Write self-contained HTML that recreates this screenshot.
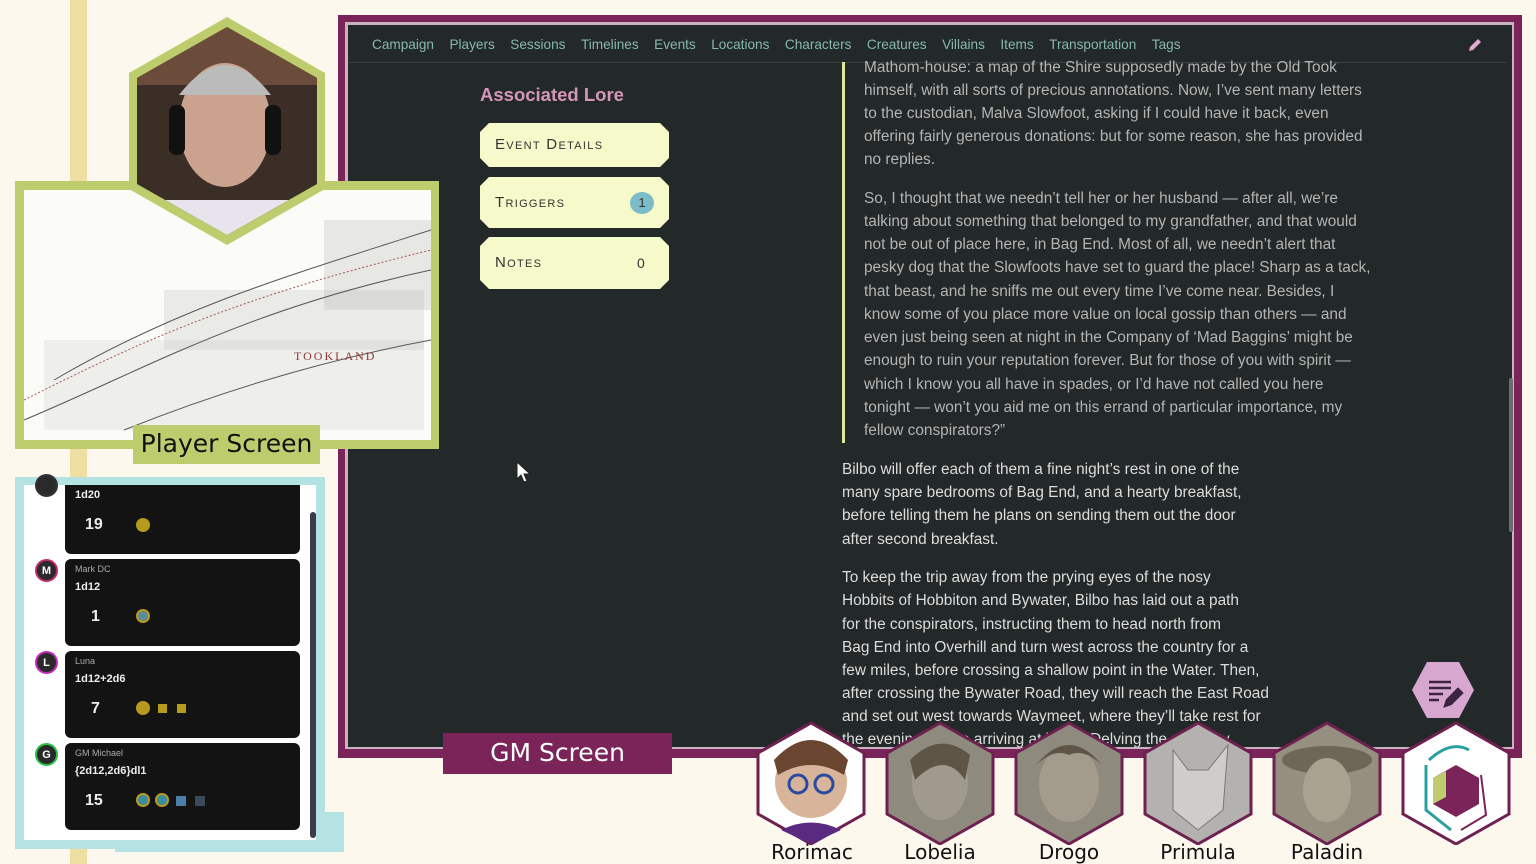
<!DOCTYPE html>
<html><head><meta charset="utf-8"><style>
*{margin:0;padding:0;box-sizing:border-box}
body{width:1536px;height:864px;overflow:hidden;background:#fcf8ed;position:relative;font-family:"Liberation Sans",sans-serif}
.a{position:absolute}
.nav span{margin-right:15.5px}
.ln{position:absolute;white-space:nowrap;font-size:15.4px;color:#b4b4b4}
.p{color:#dcdcdc}
.btn{position:absolute;left:480px;width:189px;background:#f6f9c9;clip-path:polygon(9px 0,180px 0,189px 9px,189px calc(100% - 9px),180px 100%,9px 100%,0 calc(100% - 9px),0 9px);font-variant:small-caps;letter-spacing:1.3px;font-size:15px;color:#333;padding-left:15px}
.card{position:absolute;left:65px;width:235px;background:#131313;border-radius:6px;color:#eee}
.av{position:absolute;left:35px;width:23px;height:23px;border-radius:50%;background:#2a2a2a;color:#fff;font-size:11px;font-weight:bold;text-align:center;line-height:20px}
.nm{position:absolute;font-size:20px;color:#111;width:130px;text-align:center;top:840px;font-family:"DejaVu Sans",sans-serif}
</style></head><body>
<div class="a" style="left:70px;top:0;width:17px;height:864px;background:#efdfa3"></div>

<div class="a" style="left:338px;top:15px;width:1184px;height:743px;background:#7b2459"></div>
<div class="a" style="left:345px;top:22px;width:1169px;height:727px;background:#c9b3c0"></div>
<div class="a" style="left:348px;top:25px;width:1164px;height:722px;background:#232828"></div>
<div class="a" style="left:349px;top:62px;width:1157px;height:1px;background:#3d4343"></div>
<div class="a nav" style="left:372px;top:37px;font-size:13.6px;color:#86b8ad;white-space:nowrap"><span>Campaign</span><span>Players</span><span>Sessions</span><span>Timelines</span><span>Events</span><span>Locations</span><span>Characters</span><span>Creatures</span><span>Villains</span><span>Items</span><span>Transportation</span><span>Tags</span></div>
<svg class="a" style="left:1467px;top:37px" width="16" height="16" viewBox="0 0 16 16"><path d="M2 14 L3 10 L11 2 L14 5 L6 13 Z" fill="#e0a9d0"/></svg>
<div class="a" style="left:1509px;top:378px;width:4px;height:154px;background:#6a6e6e;border-radius:2px"></div>

<div class="a" style="left:480px;top:84px;font-size:18.5px;font-weight:bold;color:#d497b9">Associated Lore</div>
<div class="btn" style="top:123px;height:44px;line-height:44px">Event Details</div>
<div class="btn" style="top:177px;height:51px;line-height:51px">Triggers<span style="position:absolute;left:150px;top:15px;width:24px;height:22px;border-radius:50%;background:#7cbcc9;text-align:center;line-height:22px;font-size:13px;letter-spacing:0">1</span></div>
<div class="btn" style="top:237px;height:52px;line-height:52px">Notes<span style="position:absolute;left:157px;letter-spacing:0;font-size:14px">0</span></div>

<svg class="a" style="left:515px;top:461px" width="18" height="22"><path d="M2 1 L2 18 L6 14 L9 21 L12 20 L9 13 L15 13 Z" fill="#fff" stroke="#222" stroke-width="1"/></svg>

<div class="a" style="left:842px;top:62px;width:3px;height:381px;background:#dfe59a"></div>
<div class="ln" style="left:864px;top:59px">Mathom-house: a map of the Shire supposedly made by the Old Took</div>
<div class="ln" style="left:864px;top:82px">himself, with all sorts of precious annotations. Now, I’ve sent many letters</div>
<div class="ln" style="left:864px;top:105px">to the custodian, Malva Slowfoot, asking if I could have it back, even</div>
<div class="ln" style="left:864px;top:128px">offering fairly generous donations: but for some reason, she has provided</div>
<div class="ln" style="left:864px;top:151px">no replies.</div>
<div class="ln" style="left:864px;top:190px">So, I thought that we needn’t tell her or her husband — after all, we’re</div>
<div class="ln" style="left:864px;top:213px">talking about something that belonged to my grandfather, and that would</div>
<div class="ln" style="left:864px;top:236px">not be out of place here, in Bag End. Most of all, we needn’t alert that</div>
<div class="ln" style="left:864px;top:259px">pesky dog that the Slowfoots have set to guard the place! Sharp as a tack,</div>
<div class="ln" style="left:864px;top:283px">that beast, and he sniffs me out every time I’ve come near. Besides, I</div>
<div class="ln" style="left:864px;top:306px">know some of you place more value on local gossip than others — and</div>
<div class="ln" style="left:864px;top:329px">even just being seen at night in the Company of ‘Mad Baggins’ might be</div>
<div class="ln" style="left:864px;top:352px">enough to ruin your reputation forever. But for those of you with spirit —</div>
<div class="ln" style="left:864px;top:376px">which I know you all have in spades, or I’d have not called you here</div>
<div class="ln" style="left:864px;top:399px">tonight — won’t you aid me on this errand of particular importance, my</div>
<div class="ln" style="left:864px;top:422px">fellow conspirators?”</div>
<div class="ln p" style="left:842px;top:461px">Bilbo will offer each of them a fine night’s rest in one of the</div>
<div class="ln p" style="left:842px;top:484px">many spare bedrooms of Bag End, and a hearty breakfast,</div>
<div class="ln p" style="left:842px;top:507px">before telling them he plans on sending them out the door</div>
<div class="ln p" style="left:842px;top:531px">after second breakfast.</div>
<div class="ln p" style="left:842px;top:569px">To keep the trip away from the prying eyes of the nosy</div>
<div class="ln p" style="left:842px;top:592px">Hobbits of Hobbiton and Bywater, Bilbo has laid out a path</div>
<div class="ln p" style="left:842px;top:616px">for the conspirators, instructing them to head north from</div>
<div class="ln p" style="left:842px;top:639px">Bag End into Overhill and turn west across the country for a</div>
<div class="ln p" style="left:842px;top:662px">few miles, before crossing a shallow point in the Water. Then,</div>
<div class="ln p" style="left:842px;top:685px">after crossing the Bywater Road, they will reach the East Road</div>
<div class="ln p" style="left:842px;top:708px">and set out west towards Waymeet, where they’ll take rest for</div>
<div class="ln p" style="left:842px;top:731px;height:16px;overflow:hidden">the evening before arriving at last in Delving the next day.</div>

<svg class="a" style="left:1412px;top:661px" width="62" height="58" viewBox="0 0 62 58"><polygon points="15,1 47,1 62,29 47,57 15,57 0,29" fill="#d8a7d0"/><g stroke="#3a2440" stroke-width="2.4" fill="none"><path d="M17 21H39M17 27H39M17 33H31M17 39H27"/><path d="M33 45 L35 39 L46 28 L50 32 L39 43 Z" fill="#3a2440"/></g></svg>

<div class="a" style="left:443px;top:733px;width:229px;height:41px;background:#7b2459;color:#fff;font-size:25px;text-align:center;line-height:40px;font-family:'DejaVu Sans',sans-serif">GM Screen</div>

<div class="a" style="left:15px;top:181px;width:424px;height:268px;background:#bdcc6c"></div>
<div class="a" style="left:24px;top:190px;width:407px;height:250px;background:#fbfbf8;overflow:hidden">
<svg width="407" height="250"><g stroke="#555" fill="none" stroke-width="1"><path d="M0 210 C100 160 200 110 407 60" stroke="#a55" stroke-dasharray="2 2"/><path d="M0 230 C120 180 220 120 407 80"/><path d="M30 190 C150 120 250 90 407 40"/><path d="M100 240 C200 200 300 170 407 150"/></g>
<g fill="#666" opacity="0.55"><rect x="20" y="150" width="380" height="90" opacity="0.15"/><rect x="140" y="100" width="260" height="60" opacity="0.2"/><rect x="300" y="30" width="107" height="90" opacity="0.25"/></g>
<text x="270" y="170" font-family="Liberation Serif" font-size="12" fill="#8a3a3a" letter-spacing="2">TOOKLAND</text></svg></div>
<div class="a" style="left:133px;top:425px;width:187px;height:39px;background:#bdcc6c;font-size:25px;text-align:center;line-height:38px;color:#111;font-family:'DejaVu Sans',sans-serif">Player Screen</div>
<svg class="a" style="left:127px;top:15px" width="200" height="232" viewBox="0 0 200 232"><polygon points="100,2 198,58 198,174 100,230 2,174 2,58" fill="#bdcc6c"/><clipPath id="h"><polygon points="100,12 190,63 190,169 100,220 10,169 10,63"/></clipPath><g clip-path="url(#h)"><rect width="200" height="232" fill="#3a2e26"/><rect x="0" y="0" width="200" height="70" fill="#6b4c3a"/><rect x="0" y="185" width="200" height="50" fill="#e8e4ee"/><ellipse cx="98" cy="110" rx="46" ry="62" fill="#caa28e"/><path d="M52 80 Q98 20 144 80" fill="#bbb"/><rect x="42" y="90" width="16" height="50" rx="7" fill="#111"/><rect x="138" y="90" width="16" height="50" rx="7" fill="#111"/></g></svg>

<div class="a" style="left:115px;top:812px;width:229px;height:40px;background:#b5e3e3"></div>
<div class="a" style="left:15px;top:477px;width:310px;height:372px;background:#b5e3e3"></div>
<div class="a" style="left:24px;top:485px;width:292px;height:355px;background:#fff;overflow:hidden"></div>
<div class="a" style="left:310px;top:512px;width:6px;height:326px;background:#3a3d48;border-radius:3px"></div>
<div class="card" style="top:485px;height:69px;border-radius:0 0 6px 6px"><div class="a" style="left:10px;top:4px;font-size:11px;font-weight:bold">1d20</div><div class="a" style="left:20px;top:31px;font-size:16px;font-weight:bold">19</div><div class="a" style="left:71px;top:33px;width:14px;height:14px;border-radius:50%;background:#b59a1c"></div></div>
<div class="card" style="top:559px;height:87px"><div class="a" style="left:10px;top:5px;font-size:9px;color:#aaa">Mark DC</div><div class="a" style="left:10px;top:22px;font-size:11px;font-weight:bold">1d12</div><div class="a" style="left:26px;top:49px;font-size:16px;font-weight:bold">1</div><div class="a" style="left:71px;top:50px;width:14px;height:14px;border-radius:50%;background:#5a8c9a;border:2px solid #b59a1c"></div></div>
<div class="card" style="top:651px;height:87px"><div class="a" style="left:10px;top:5px;font-size:9px;color:#aaa">Luna</div><div class="a" style="left:10px;top:22px;font-size:11px;font-weight:bold">1d12+2d6</div><div class="a" style="left:26px;top:49px;font-size:16px;font-weight:bold">7</div><div class="a" style="left:71px;top:50px;width:14px;height:14px;border-radius:50%;background:#b59a1c"></div><div class="a" style="left:93px;top:53px;width:9px;height:9px;background:#b59a1c"></div><div class="a" style="left:112px;top:53px;width:9px;height:9px;background:#b59a1c"></div></div>
<div class="card" style="top:743px;height:87px"><div class="a" style="left:10px;top:5px;font-size:9px;color:#aaa">GM Michael</div><div class="a" style="left:10px;top:22px;font-size:11px;font-weight:bold">{2d12,2d6}dl1</div><div class="a" style="left:20px;top:49px;font-size:16px;font-weight:bold">15</div><div class="a" style="left:71px;top:50px;width:14px;height:14px;border-radius:50%;background:#3a8aa0;border:2px solid #b59a1c"></div><div class="a" style="left:90px;top:50px;width:14px;height:14px;border-radius:50%;background:#3a8aa0;border:2px solid #b59a1c"></div><div class="a" style="left:111px;top:53px;width:10px;height:10px;background:#4a7fa8"></div><div class="a" style="left:130px;top:53px;width:10px;height:10px;background:#3a4a5a"></div></div>
<div class="av" style="top:474px;border:2px solid #333"></div>
<div class="av" style="top:559px;border:2px solid #c02a6a">M</div>
<div class="av" style="top:651px;border:2px solid #c02ac0">L</div>
<div class="av" style="top:743px;border:2px solid #2ac04a">G</div>

<svg class="a" style="left:750px;top:720px" width="786" height="125" viewBox="0 0 786 125">
<defs><polygon id="hx" points="55,3 108,33 108,94 55,124 2,94 2,33"/></defs>
<g transform="translate(6,0)"><use href="#hx" fill="#fff" stroke="#6e2150" stroke-width="3"/><circle cx="55" cy="62" r="36" fill="#d8b49a"/><path d="M18 40 Q55 0 92 40 L88 55 Q55 35 22 55 Z" fill="#6a4530"/><g fill="none" stroke="#2a4aa0" stroke-width="3"><circle cx="42" cy="64" r="9"/><circle cx="68" cy="64" r="9"/></g><path d="M25 110 Q55 95 85 110 L55 124Z" fill="#5a2a80"/></g>
<g transform="translate(135,0)"><use href="#hx" fill="#8f8a7e" stroke="#6e2150" stroke-width="3"/><ellipse cx="55" cy="62" rx="28" ry="38" fill="#a09a8c"/><path d="M25 40 Q55 10 85 35 L80 60 Q60 30 30 60Z" fill="#5e5547"/></g>
<g transform="translate(264,0)"><use href="#hx" fill="#8f8a7e" stroke="#6e2150" stroke-width="3"/><ellipse cx="55" cy="64" rx="30" ry="38" fill="#a39c8c"/><path d="M22 45 Q55 5 88 45 Q70 28 55 35 Q40 28 22 45Z" fill="#5e5547"/></g>
<g transform="translate(393,0)"><use href="#hx" fill="#b4b2ae" stroke="#6e2150" stroke-width="3"/><path d="M30 30 L45 50 L65 50 L85 25 L80 90 L55 110 L30 90Z" fill="#cfcdc9" stroke="#777"/></g>
<g transform="translate(522,0)"><use href="#hx" fill="#958f80" stroke="#6e2150" stroke-width="3"/><ellipse cx="55" cy="40" rx="45" ry="14" fill="#6e6656"/><ellipse cx="55" cy="70" rx="24" ry="32" fill="#aaa291"/></g>
<g transform="translate(651,0)"><use href="#hx" fill="#fff" stroke="#6e2150" stroke-width="3"/><polygon points="55,45 78,58 78,84 55,97 32,84 32,58" fill="#7b2459"/><polygon points="32,58 45,51 45,77 32,84" fill="#bdcc6c"/><path d="M28 40 Q50 20 68 30 M25 45 L25 90 L50 110" stroke="#2aa0a0" stroke-width="3" fill="none"/><path d="M80 55 L85 95 L60 110" stroke="#7b2459" stroke-width="2" fill="none"/></g>
</svg>
<div class="nm" style="left:747px">Rorimac</div>
<div class="nm" style="left:875px">Lobelia</div>
<div class="nm" style="left:1004px">Drogo</div>
<div class="nm" style="left:1133px">Primula</div>
<div class="nm" style="left:1262px">Paladin</div>
</body></html>
